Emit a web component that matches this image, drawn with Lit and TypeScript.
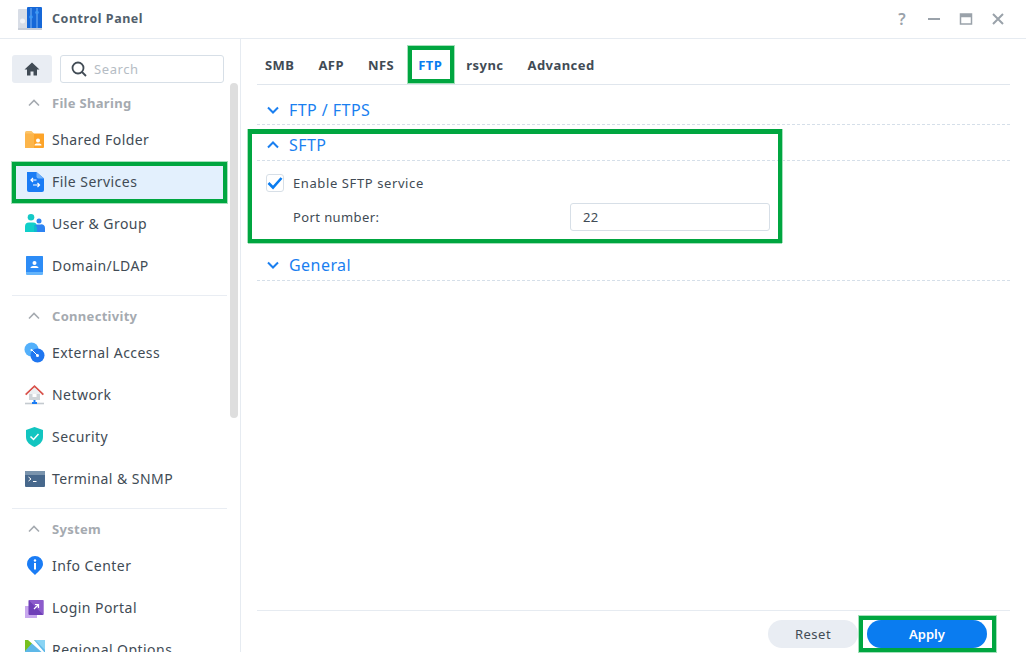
import { LitElement, html, css, svg } from "lit";
import { customElement } from "lit/decorators.js";

const icons: Record<string, unknown> = {
  folder: svg`<path d="M1 3.500A1.500 1.500 0 0 1 2.500 2h5L10 4.500H1z" fill="#fbc56b"/><path d="M1 4.500h18.500a.5.5 0 0 1 .5.5v13a1 1 0 0 1-1 1H2a1 1 0 0 1-1-1z" fill="#fda429"/><path d="M1 4.500h9V19H2a1 1 0 0 1-1-1z" fill="#fcb54a"/><circle cx="14" cy="11.500" r="2" fill="#fff"/><path d="M10.500 16.500c0-1.500 1-2 3.500-2s3.500.5 3.500 2z" fill="#fff"/>`,
  services: svg`<path d="M3 1h9.500L20 7.500V19a2 2 0 0 1-2 2H5a2 2 0 0 1-2-2z" fill="#1a7cf5"/><path d="M12.500 1 20 7.500h-5.500a2 2 0 0 1-2-2z" fill="#6fb1fa"/><path d="M12.500 9H7m2-2-2 2 2 2M9 14h6.500m-2-2 2 2-2 2" fill="none" stroke="#fff" stroke-width="1.200"/>`,
  users: svg`<circle cx="7" cy="4.300" r="3.300" fill="#14c9c6"/><path d="M1 19v-5.500a4 4 0 0 1 4-4h4a4 4 0 0 1 4 4V19z" fill="#10cfc9"/><circle cx="15" cy="8" r="2.500" fill="#2d83f2"/><path d="M10 19v-4a3.500 3.500 0 0 1 3.500-3.500h3A3.500 3.500 0 0 1 21 15v4z" fill="#2d83f2"/><path d="M10 19v-7a3.500 3.500 0 0 1 3 3.500V19z" fill="#10b8d0"/>`,
  domain: svg`<rect x="2" y="1" width="17" height="19" rx="1" fill="#64b4fb"/><path d="M2 2a1 1 0 0 1 1-1h15a1 1 0 0 1 1 1v15H2z" fill="#2d8cf6"/><circle cx="10.500" cy="8" r="2" fill="#fff"/><path d="M6.500 13c0-1.500 1.500-2 4-2s4 .5 4 2z" fill="#fff"/>`,
  external: svg`<circle cx="7.500" cy="7.500" r="7" fill="#53b0fb"/><circle cx="13.500" cy="13.500" r="7" fill="#1f76f0"/><path d="M7.500 7.500l6 6" stroke="#fff" stroke-width="1"/><circle cx="13.500" cy="13.500" r="1.500" fill="#fff"/><circle cx="7.500" cy="8" r="1" fill="#fff"/>`,
  network: svg`<rect x="5" y="8" width="11" height="8" fill="#cfd4d8"/><path d="M10.500 1 1 10l1.300 1.200 8.200-7.600 8.200 7.600L20 10z" fill="#d9534c"/><path d="M10.500 3.600 3.600 10h13.800z" fill="#eceff1"/><rect x="8.500" y="10" width="4" height="3" fill="#fff"/><path d="M10.500 16v3" stroke="#1a7cf5" stroke-width="2"/><path d="M1 19.500h19" stroke="#c4cacf" stroke-width="1.600"/><rect x="8" y="18" width="5" height="2" fill="#1a7cf5"/>`,
  security: svg`<path d="M10.500 1 19 4v7c0 5-4 8-8.500 10C6 19 2 16 2 11V4z" fill="#12c5c0"/><path d="M6.500 10.500l3 3 5-5.500" fill="none" stroke="#fff" stroke-width="1.500"/>`,
  terminal: svg`<rect x="1" y="3" width="20" height="16" rx="1" fill="#47688c"/><path d="M1 4a1 1 0 0 1 1-1h18a1 1 0 0 1 1 1v3H1z" fill="#7a94ad"/><path d="M4.500 9l2.500 2-2.500 2" fill="none" stroke="#fff" stroke-width="1"/><path d="M9 13.500h3.500" stroke="#fff" stroke-width="1"/>`,
  info: svg`<path d="M11 1a8 8 0 0 1 8 8c0 4-4 7-8 11-4-4-8-7-8-11a8 8 0 0 1 8-8z" fill="#1a7cf5"/><circle cx="11" cy="5.500" r="1.200" fill="#fff"/><rect x="10" y="8" width="2" height="6.500" fill="#fff"/>`,
  login: svg`<rect x="1" y="9" width="12" height="12" fill="#c8a8ee"/><rect x="4.500" y="3" width="15" height="15" rx="1" fill="#6f3fb8"/><path d="M4.500 3h15v15z" fill="#9a6ad4" opacity=".7"/><path d="M10 12l4.500-4.500m-3.500 0h3.500V11" fill="none" stroke="#fff" stroke-width="1.200"/>`,
  regional: svg`<rect x="1" y="1" width="20" height="20" fill="#5eb8e8"/><path d="M1 1h10L1 12z" fill="#78c020"/><path d="M11 1h10v10z" fill="#8ad4f4"/><path d="M4 1h6l11 13v2z" fill="#fff"/>`,
};

const chev = (up: boolean) => html`<svg class="chev" viewBox="0 0 12 8"><path d=${up ? "M1 6.500 6 1.500l5 5" : "M1 1.500l5 5 5-5"}></path></svg>`;

const sections = [
  { title: "File Sharing", items: [["folder", "Shared Folder"], ["services", "File Services"], ["users", "User & Group"], ["domain", "Domain/LDAP"]] },
  { title: "Connectivity", items: [["external", "External Access"], ["network", "Network"], ["security", "Security"], ["terminal", "Terminal & SNMP"]] },
  { title: "System", items: [["info", "Info Center"], ["login", "Login Portal"], ["regional", "Regional Options"]] },
];

@customElement("app-root")
export class AppRoot extends LitElement {
  static styles = css`
    :host { display: block; position: relative; width: 1026px; height: 658px; overflow: hidden; background: #fff; font-family: "Noto Sans", sans-serif; font-size: 14px; color: #414b55; }
    * { box-sizing: border-box; }
    .window { display: flex; flex-direction: column; height: 100%; }
    .titlebar { flex: none; height: 39px; display: flex; align-items: center; padding-left: 18px; border-bottom: 1px solid #e6ebf1; }
    .logo { width: 24px; height: 24px; margin-right: 10px; }
    .app-title { font-size: 12.500px; font-weight: 700; color: #525f6c; flex: 1; letter-spacing: .54px; margin-top: -2px; }
    .winbtns { display: flex; padding-right: 12px; }
    .winbtn { width: 32px; height: 24px; display: flex; align-items: center; justify-content: center; color: #9aa2aa; font-size: 16px; font-weight: 600; }
    .winbtn svg { width: 14px; height: 14px; }
    .body { flex: 1; display: flex; min-height: 0; }
    .sidebar { position: relative; flex: none; width: 241px; height: 613px; border-right: 1px solid #e6ebf1; padding: 16px 0 0 12px; overflow: hidden; }
    .searchrow { display: flex; gap: 8px; height: 28px; width: 212px; }
    .home { width: 40px; height: 28px; border-radius: 3px; background: #e9edf3; display: flex; align-items: center; justify-content: center; }
    .home svg { width: 16px; height: 16px; fill: #414b55; }
    .search { flex: 1; border: 1px solid #d7dfe7; border-radius: 3px; display: flex; align-items: center; padding-left: 10px; gap: 7px; color: #b5bcc4; font-size: 13px; letter-spacing: .6px; }
    .search svg { width: 16px; height: 16px; fill: none; stroke: #414b55; stroke-width: 1.800; }
    .section { width: 215px; padding-top: 4px; padding-bottom: 8px; border-bottom: 1px solid #e9edf3; }
    .section:last-of-type { border-bottom: none; }
    .sec-head { height: 32px; display: flex; align-items: center; font-size: 13px; font-weight: 700; color: #a5aab0; padding-left: 16px; letter-spacing: .3px; }
    .sec-head .chev { width: 12px; height: 8px; margin-right: 12px; stroke: #a5aab0; }
    .chev { fill: none; stroke-width: 1.600; stroke: currentColor; }
    .item { height: 42px; display: flex; align-items: center; padding-left: 12px; gap: 6px; white-space: nowrap; letter-spacing: .45px; }
    .item.sel { background: #e3f0fd; }
    .item svg { width: 22px; height: 22px; flex: none; }
    .item span { margin-top: -2px; }
    .scrollbar { position: absolute; left: 230px; top: 44px; width: 8px; height: 335px; border-radius: 4px; background: #dedede; }
    .main { flex: 1; min-width: 0; display: flex; flex-direction: column; padding: 0 16px; }
    .tabs { flex: none; height: 46px; display: flex; gap: 8px; border-bottom: 1px solid #e0e6ed; align-items: center; padding-top: 6px; font-size: 13px; font-weight: 700; color: #414b55; letter-spacing: .45px; }
    .tab { padding: 0 8px; }
    .tab.active { color: #0a7cf0; }
    .content { flex: 1; }
    .acc-head { height: 36px; border-bottom: 1px dashed #d5dfe9; display: flex; align-items: center; color: #1a7ff0; font-size: 16px; letter-spacing: .45px; padding: 5px 0 0 10px; gap: 10px; }
    .acc-head .chev { width: 12px; height: 8px; stroke-width: 2; }
    .first .acc-head { height: 40px; padding-top: 10px; }
    .acc-body { padding-top: 5px; height: 84px; }
    .row { height: 34px; display: flex; align-items: center; font-size: 13px; letter-spacing: .6px; }
    .row.port { padding-left: 36px; justify-content: space-between; padding-right: 240px; letter-spacing: .4px; }
    .check { width: 18px; height: 18px; border: 1px solid #d7dfe7; border-radius: 3px; margin: 0 9px 0 9px; display: flex; align-items: center; justify-content: center; }
    .check svg { width: 16px; height: 14px; fill: none; stroke: #0a7cf0; stroke-width: 2.600; }
    .input { width: 200px; height: 28px; border: 1px solid #d7dfe7; border-radius: 3px; display: flex; align-items: center; padding-left: 12px; }
    .footer { flex: none; height: 48px; border-top: 1px solid #e6ebf1; display: flex; justify-content: flex-end; align-items: flex-start; padding-right: 23px; padding-top: 9px; gap: 9px; font-size: 13px; }
    .btn { height: 28px; border-radius: 14px; display: flex; align-items: center; justify-content: center; }
    .reset { width: 90px; background: #e9edf3; letter-spacing: .5px; }
    .apply { width: 120px; background: #0a7cf0; color: #fff; font-weight: 600; }
    .mark { position: absolute; border: 4px solid #00a640; box-shadow: 0 0 0 1px #a5e0bb; pointer-events: none; }
    .mark-nav { left: 12px; top: 162px; width: 215px; height: 41px; }
    .mark-tab { left: 408px; top: 46px; width: 46px; height: 37px; }
    .mark-sftp { left: 248px; top: 129px; width: 534px; height: 114px; border-top-width: 5px; box-shadow: 0 1px 0 #a5e0bb, 1px 0 0 #a5e0bb, -1px 0 0 #a5e0bb; }
    .mark-apply { left: 859px; top: 616px; width: 137px; height: 36px; }
  `;

  render() {
    return html`
      <div class="window">
        <div class="titlebar">
          <svg class="logo" viewBox="0 0 24 24">
            <rect x="0" y="2" width="12" height="20" rx="1" fill="#d8dde6"/>
            <rect x="9" y="0" width="15" height="22" rx="1" fill="#1668d8"/>
            <rect x="0" y="21" width="24" height="2" fill="#c8ced8"/>
            <circle cx="4.500" cy="14" r="2.500" fill="#f2f4f8"/>
            <path d="M13 1v20M19 1v20" stroke="#7db5f5" stroke-width="1"/>
            <circle cx="13" cy="10" r="1.800" fill="#3f9af5"/><circle cx="19" cy="5.500" r="1.800" fill="#3f9af5"/>
          </svg>
          <div class="app-title">Control Panel</div>
          <div class="winbtns">
            <div class="winbtn">?</div>
            <div class="winbtn"><svg viewBox="0 0 14 14"><path d="M1 7h12" stroke="currentColor" stroke-width="2"/></svg></div>
            <div class="winbtn"><svg viewBox="0 0 14 14"><path d="M1.500 2h11v10h-11z M1.500 4.500h11" fill="none" stroke="currentColor" stroke-width="1.500"/><rect x="1" y="2" width="12" height="3" fill="currentColor"/></svg></div>
            <div class="winbtn"><svg viewBox="0 0 14 14"><path d="M2 2l10 10M12 2 2 12" stroke="currentColor" stroke-width="2"/></svg></div>
          </div>
        </div>
        <div class="body">
          <div class="sidebar">
            <div class="searchrow">
              <div class="home"><svg viewBox="0 0 16 16"><path d="M8 1.500 0.500 8.500H3v6h3.500v-4h3v4H13v-6h2.500z"/></svg></div>
              <div class="search"><svg viewBox="0 0 16 16"><circle cx="7" cy="7" r="5.500"/><path d="M11 11l4 4"/></svg>Search</div>
            </div>
            ${sections.map((s) => html`
              <div class="section">
                <div class="sec-head">${chev(true)}${s.title}</div>
                ${s.items.map(([ic, label]) => html`
                  <div class="item ${label === "File Services" ? "sel" : ""}">
                    <svg viewBox="0 0 22 22">${icons[ic]}</svg><span>${label}</span>
                  </div>`)}
              </div>`)}
            <div class="scrollbar"></div>
          </div>
          <div class="main">
            <div class="tabs">
              ${["SMB", "AFP", "NFS", "FTP", "rsync", "Advanced"].map((t) => html`<div class="tab ${t === "FTP" ? "active" : ""}">${t}</div>`)}
            </div>
            <div class="content">
              <div class="first"><div class="acc-head">${chev(false)}FTP / FTPS</div></div>
              <div class="acc-head">${chev(true)}SFTP</div>
              <div class="acc-body">
                <div class="row"><span class="check"><svg viewBox="0 0 16 14"><path d="M1.500 7l4.500 4.500L14.500 2"/></svg></span>Enable SFTP service</div>
                <div class="row port"><span>Port number:</span><span class="input">22</span></div>
              </div>
              <div class="acc-head">${chev(false)}General</div>
            </div>
            <div class="footer">
              <div class="btn reset">Reset</div>
              <div class="btn apply">Apply</div>
            </div>
          </div>
        </div>
      </div>
      <div class="mark mark-nav"></div>
      <div class="mark mark-tab"></div>
      <div class="mark mark-sftp"></div>
      <div class="mark mark-apply"></div>
    `;
  }
}
